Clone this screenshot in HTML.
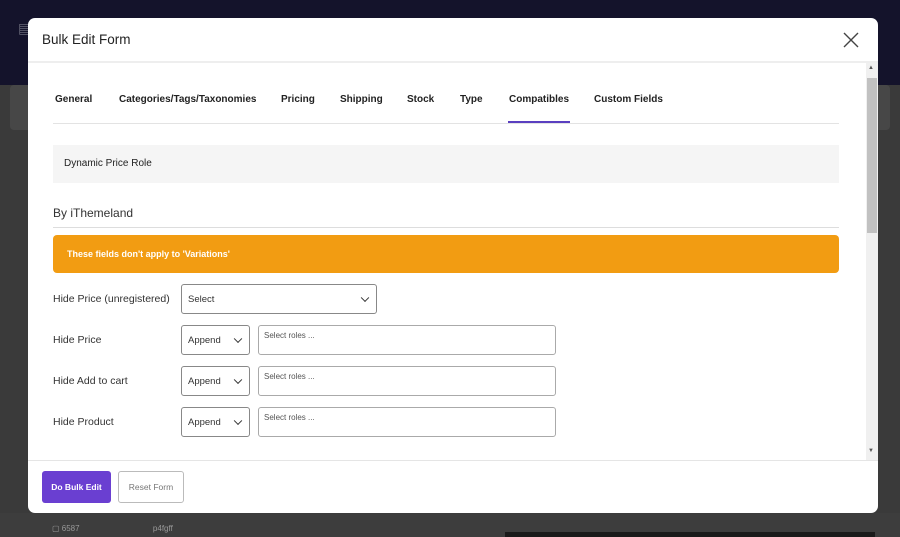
<!DOCTYPE html>
<html><head><style>
*{box-sizing:border-box;margin:0;padding:0}
body{width:900px;height:537px;overflow:hidden;background:#3a3a3a;font-family:"Liberation Sans",sans-serif;position:relative}
.abs{position:absolute}
.t{font-size:10px;color:#222;font-weight:bold}
.lbl{font-size:10.5px;color:#333}
.sel{border:1px solid #888;border-radius:3px;background:#fff;font-size:9.5px;color:#333;padding-left:6px;display:flex;align-items:center}
.chev{position:absolute;right:8px;top:50%;width:6px;height:6px;border-right:1.3px solid #333;border-bottom:1.3px solid #333;transform:translateY(-70%) rotate(45deg)}
.inp{border:1px solid #aaa;border-radius:3px;background:#fff;font-size:8px;color:#555;padding:5px 5px}
</style></head><body>
<div class="abs" style="left:0;top:0;width:900px;height:85px;background:#14132b"></div>
<div class="abs" style="left:10px;top:85px;width:880px;height:45px;background:#474747;border-radius:4px"></div>
<div class="abs" style="left:0;top:513px;width:900px;height:24px;background:#3d3d3d"></div>
<div class="abs" style="left:18px;top:20px;color:#667;font-size:14px">▤</div>
<div class="abs" style="left:52px;top:524px;font-size:8px;color:#999">▢ 6587 &nbsp;&nbsp;&nbsp;&nbsp;&nbsp;&nbsp;&nbsp;&nbsp;&nbsp;&nbsp;&nbsp;&nbsp;&nbsp;&nbsp;&nbsp;&nbsp;&nbsp;&nbsp;&nbsp;&nbsp;&nbsp;&nbsp;&nbsp;&nbsp;&nbsp;&nbsp;&nbsp;&nbsp;&nbsp;&nbsp;&nbsp; p4fgff</div>
<div class="abs" style="left:505px;top:532px;width:370px;height:5px;background:#1a1a1a"></div>

<div class="abs" style="left:28px;top:18px;width:850px;height:495px;background:#fff;border-radius:7px;overflow:hidden">
  <div class="abs" style="left:14px;top:14px;font-size:13.5px;color:#222">Bulk Edit Form</div>
  <svg class="abs" style="left:815px;top:14px" width="16" height="16"><path d="M1 1L15 15M15 1L1 15" stroke="#444" stroke-width="1.4"/></svg>
  <div class="abs" style="left:0;top:43px;width:850px;height:2px;background:#eee"></div>
  <div class="abs" style="left:838px;top:45px;width:12px;height:397px;background:#f0f0f0"></div>
  <div class="abs" style="left:839px;top:60px;width:10px;height:155px;background:#c1c1c1"></div>
  <div class="abs" style="left:840px;top:47px;font-size:6px;color:#555">▲</div>
  <div class="abs" style="left:840px;top:430px;font-size:6px;color:#555">▼</div>

  <div class="abs t" style="left:27px;top:76px">General</div>
  <div class="abs t" style="left:91px;top:76px">Categories/Tags/Taxonomies</div>
  <div class="abs t" style="left:253px;top:76px">Pricing</div>
  <div class="abs t" style="left:312px;top:76px">Shipping</div>
  <div class="abs t" style="left:379px;top:76px">Stock</div>
  <div class="abs t" style="left:432px;top:76px">Type</div>
  <div class="abs t" style="left:481px;top:76px">Compatibles</div>
  <div class="abs t" style="left:566px;top:76px">Custom Fields</div>
  <div class="abs" style="left:25px;top:105px;width:786px;height:1px;background:#e3e3e3"></div>
  <div class="abs" style="left:480px;top:103px;width:62px;height:2px;background:#5a3fc0"></div>

  <div class="abs" style="left:25px;top:127px;width:786px;height:38px;background:#f5f5f5"></div>
  <div class="abs lbl" style="left:36px;top:140px;font-size:10px;color:#222">Dynamic Price Role</div>
  <div class="abs" style="left:25px;top:188px;font-size:12px;color:#333">By iThemeland</div>
  <div class="abs" style="left:25px;top:209px;width:786px;height:1px;background:#ddd"></div>
  <div class="abs" style="left:25px;top:217px;width:786px;height:38px;background:#f29c12;border-radius:4px"></div>
  <div class="abs" style="left:39px;top:231px;font-size:9px;color:#fff;font-weight:bold">These fields don't apply to 'Variations'</div>

  <div class="abs lbl" style="left:25px;top:275px">Hide Price (unregistered)</div>
  <div class="abs sel" style="left:153px;top:266px;width:196px;height:30px">Select<span class="chev"></span></div>

  <div class="abs lbl" style="left:25px;top:316px">Hide Price</div>
  <div class="abs sel" style="left:153px;top:307px;width:69px;height:30px">Append<span class="chev"></span></div>
  <div class="abs inp" style="left:230px;top:307px;width:298px;height:30px">Select roles ...</div>

  <div class="abs lbl" style="left:25px;top:357px">Hide Add to cart</div>
  <div class="abs sel" style="left:153px;top:348px;width:69px;height:30px">Append<span class="chev"></span></div>
  <div class="abs inp" style="left:230px;top:348px;width:298px;height:30px">Select roles ...</div>

  <div class="abs lbl" style="left:25px;top:398px">Hide Product</div>
  <div class="abs sel" style="left:153px;top:389px;width:69px;height:30px">Append<span class="chev"></span></div>
  <div class="abs inp" style="left:230px;top:389px;width:298px;height:30px">Select roles ...</div>

  <div class="abs" style="left:0;top:442px;width:850px;height:1px;background:#e5e5e5"></div>
  <div class="abs" style="left:14px;top:453px;width:69px;height:32px;background:#6a3fd1;border-radius:3px;color:#fff;font-size:8.5px;font-weight:bold;display:flex;align-items:center;justify-content:center">Do Bulk Edit</div>
  <div class="abs" style="left:90px;top:453px;width:66px;height:32px;border:1px solid #bbb;border-radius:3px;color:#777;font-size:8.5px;display:flex;align-items:center;justify-content:center">Reset Form</div>
</div>
</body></html>
